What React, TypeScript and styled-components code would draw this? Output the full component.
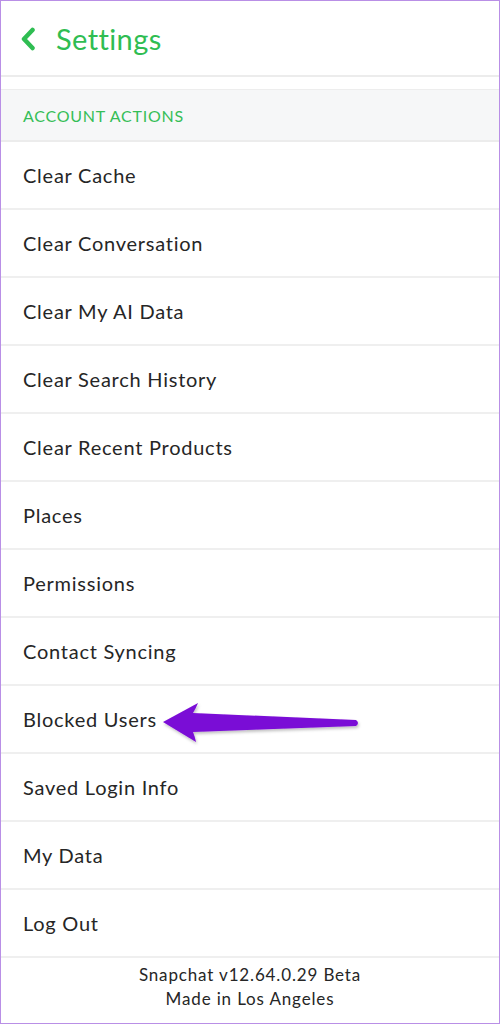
import styled, { createGlobalStyle } from "styled-components";

const GlobalStyle = createGlobalStyle`
  * {
    box-sizing: border-box;
  }
  body {
    margin: 0;
    background: #ffffff;
    font-family: Lato, "Noto Sans", sans-serif;
  }
`;

const Frame = styled.div`
  height: 1024px;
  border: 1px solid #b98fe6;
  display: flex;
  flex-direction: column;
  background: #ffffff;
  overflow: hidden;
`;

const Header = styled.div`
  height: 76px;
  display: flex;
  align-items: center;
  padding-left: 19px;
  gap: 20px;
  border-bottom: 2px solid #ececec;
  flex-shrink: 0;
`;

const BackIcon = styled.svg`
  width: 16px;
  height: 24px;
  margin-top: 1px;
`;

const Title = styled.h1`
  margin: 0;
  font-size: 29px;
  font-weight: 400;
  color: #2fbd52;
  letter-spacing: 0.4px;
`;

const Gap = styled.div`
  height: 12px;
  flex-shrink: 0;
`;

const SectionHeader = styled.div`
  height: 53px;
  display: flex;
  align-items: center;
  padding-left: 22px;
  background: #f6f7f8;
  border-top: 1px solid #ededed;
  border-bottom: 2px solid #ececec;
  color: #35be57;
  font-size: 16px;
  letter-spacing: 0.75px;
  flex-shrink: 0;
`;

const Row = styled.div`
  position: relative;
  height: 68px;
  display: flex;
  align-items: center;
  padding-left: 22px;
  border-bottom: 2px solid #efefef;
  color: #262626;
  font-size: 20px;
  letter-spacing: 0.75px;
  flex-shrink: 0;
`;

const Footer = styled.div`
  padding-top: 5px;
  text-align: center;
  font-size: 17px;
  line-height: 24px;
  letter-spacing: 0.85px;
  color: #262626;
`;

const Arrow = styled.svg`
  position: absolute;
  left: 155px;
  top: 0;
  width: 210px;
  height: 68px;
  overflow: visible;
`;

const items = [
  "Clear Cache",
  "Clear Conversation",
  "Clear My AI Data",
  "Clear Search History",
  "Clear Recent Products",
  "Places",
  "Permissions",
  "Contact Syncing",
  "Blocked Users",
  "Saved Login Info",
  "My Data",
  "Log Out",
];

function PointerArrow() {
  // coordinates relative to the row: row top sits at y=685 on the page
  return (
    <Arrow viewBox="155 685 210 68">
      <defs>
        <filter id="arrowShadow" x="-10%" y="-30%" width="120%" height="160%">
          <feDropShadow dx="1" dy="2" stdDeviation="1.5" floodColor="#000" floodOpacity="0.25" />
        </filter>
      </defs>
      <path
        d="M162 721 L197 702 Q195 707 192 712 L355 719 Q359 722 355 725 L192 731 Q194 736 195 741 Z"
        fill="#7a0bd6"
        strokeLinejoin="round"
        filter="url(#arrowShadow)"
      />
    </Arrow>
  );
}

export default function App() {
  return (
    <>
      <GlobalStyle />
      <Frame>
        <Header>
          <BackIcon viewBox="0 0 16 24">
            <path
              d="M12.5 3 L4 12 L12.5 21"
              fill="none"
              stroke="#2fbd52"
              strokeWidth="4.5"
              strokeLinecap="round"
              strokeLinejoin="round"
            />
          </BackIcon>
          <Title>Settings</Title>
        </Header>
        <Gap />
        <SectionHeader>ACCOUNT ACTIONS</SectionHeader>
        {items.map((item) => (
          <Row key={item}>
            {item}
            {item === "Blocked Users" && <PointerArrow />}
          </Row>
        ))}
        <Footer>
          <div>Snapchat v12.64.0.29 Beta</div>
          <div>Made in Los Angeles</div>
        </Footer>
      </Frame>
    </>
  );
}
